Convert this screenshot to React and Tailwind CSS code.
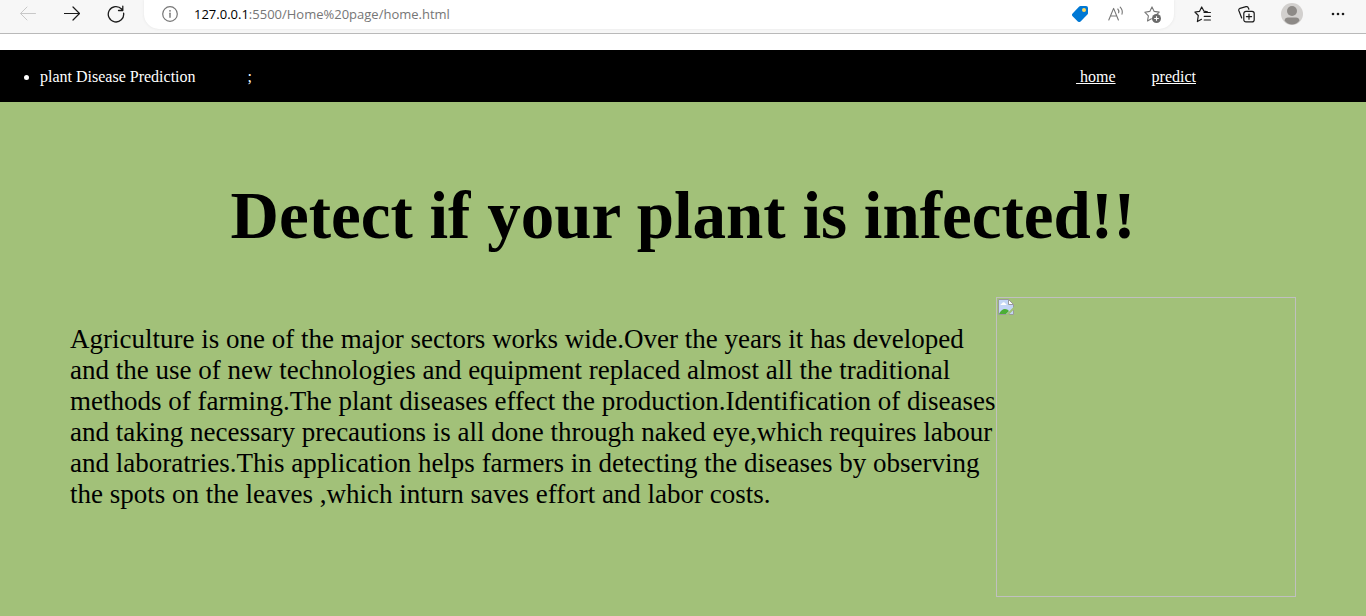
const stroke = { fill: "none", stroke: "currentColor", strokeLinecap: "round", strokeLinejoin: "round" };

function BackIcon() {
  return (
    <svg viewBox="0 0 16 16" className="size-4" strokeWidth="1" aria-hidden="true" {...stroke}>
      <path d="M15.5 7.5H.7M7 1 .5 7.5 7 14" />
    </svg>
  );
}

function ForwardIcon() {
  return (
    <svg viewBox="0 0 16 16" className="size-4" strokeWidth="1.2" aria-hidden="true" {...stroke}>
      <path d="M.5 7.5h15M9 1l6.5 6.5L9 14" />
    </svg>
  );
}

function ReloadIcon() {
  return (
    <svg viewBox="0 0 18 18" className="size-[18px]" strokeWidth="1.3" aria-hidden="true" {...stroke}>
      <path d="M16.6 8.2A7.7 7.7 0 1 1 14.6 4L15.6 5.2M15.8 1.2v4.3h-4.3" />
    </svg>
  );
}

function InfoIcon() {
  return (
    <svg viewBox="0 0 16 16" className="size-4 text-[#767676]" strokeWidth="1.2" aria-hidden="true" {...stroke}>
      <circle cx="8" cy="8" r="7.3" />
      <path d="M8 7.2v4" strokeWidth="1.4" />
      <circle cx="8" cy="4.8" r=".9" fill="currentColor" stroke="none" />
    </svg>
  );
}

function TagIcon() {
  return (
    <svg viewBox="0 0 16 16" className="size-4" aria-hidden="true">
      <path d="M8.6 0H14a2 2 0 0 1 2 2v5.2a2 2 0 0 1-.6 1.4l-6.8 6.8a2 2 0 0 1-2.8 0L.6 10.2a2 2 0 0 1 0-2.8L7.2.6A2 2 0 0 1 8.6 0Z" fill="#0078d4" />
      <circle cx="12" cy="4" r="2" fill="#ffd95e" />
    </svg>
  );
}

function ReadAloudIcon() {
  return (
    <svg viewBox="0 0 16 16" className="size-4 text-[#767676]" strokeWidth="1.1" aria-hidden="true" {...stroke}>
      <path d="M.8 14 5.6 2.4 10.4 14M2.5 10h6.2M9.8 3q1.500 1.600.8 3.800M12.200 1.200q2.900 2.900 1.800 7" />
    </svg>
  );
}

function StarAddIcon() {
  return (
    <svg viewBox="0 0 17 17" className="size-[17px]" aria-hidden="true">
      <path d="M8 .9 10.2 5.4l5 .7-3.6 3.6M7.4 12.8 3.5 15l.9-5.1L.8 6.2l5-.8L8 .9" className="text-[#767676]" strokeWidth="1.1" {...stroke} />
      <circle cx="12.5" cy="12.5" r="4.5" fill="#6b6b6b" />
      <path d="M12.5 10.2v4.6M10.2 12.5h4.6" stroke="#fff" strokeWidth="1.1" />
    </svg>
  );
}

function FavoritesIcon() {
  return (
    <svg viewBox="0 0 17 17" className="size-[17px]" strokeWidth="1.2" aria-hidden="true" {...stroke}>
      <path d="M13.4 5.8 10 5.2 7.7 1 5.6 5.3.9 6l3.4 3.5-.9 6.1 4.1-2.3M10 6.5h6.4M10.2 10.3h6.2M10.2 14h6.2" />
    </svg>
  );
}

function CollectionsIcon() {
  return (
    <svg viewBox="0 0 17 17" className="size-[17px]" strokeWidth="1.2" aria-hidden="true" {...stroke}>
      <rect x="5.8" y="5.3" width="10.4" height="10.6" rx="2.2" />
      <path d="M11 8v5.2M8.4 10.6h5.2M3.7 12 .9 4.8A2 2 0 0 1 2 2.3L8 .7A2 2 0 0 1 10.4 2l.5 1.3" />
    </svg>
  );
}

function ProfileIcon() {
  return (
    <svg viewBox="0 0 22 22" className="size-[22px]" aria-hidden="true">
      <circle cx="11" cy="11" r="11" fill="#d2d0ce" />
      <circle cx="11" cy="8" r="5" fill="#8d8a87" />
      <path d="M3.500 17.500Q4 14.600 7 14.600h8q3 0 3.500 2.900A10.500 10.500 0 0 1 11 21.600a10.500 10.500 0 0 1-7.500-4.100Z" fill="#8d8a87" />
    </svg>
  );
}

function MoreIcon() {
  return (
    <svg viewBox="0 0 14 4" className="h-1 w-3.5" fill="currentColor" aria-hidden="true">
      <circle cx="2" cy="2" r="1.3" />
      <circle cx="7" cy="2" r="1.3" />
      <circle cx="12" cy="2" r="1.3" />
    </svg>
  );
}

function BrokenImageIcon() {
  return (
    <svg viewBox="0 0 16 16" className="size-4" aria-hidden="true">
      <path d="M.5.5h10l5 5v10H.5Z" fill="#c3d6f6" stroke="#9a9a9a" />
      <path d="M10.5.5v5h5Z" fill="#fff" stroke="#9a9a9a" />
      <path d="M2.500 6q0-1.500 1.500-1.500Q4.500 3 6 3.200 7 3.400 7.300 4.500 8.600 4.700 8.500 6Z" fill="#fff" />
      <path d="M1 15q2.500-5 6-5 2.500 0 4 2L8 15Z" fill="#4cae35" />
      <path d="M7.500 16 16 7.500v3L10.500 16Z" fill="#a2c179" />
    </svg>
  );
}

function IconButton({ label, children, className = "", disabled = false }) {
  return (
    <button type="button" aria-label={label} disabled={disabled} className={`flex h-7 shrink-0 items-center justify-center ${className}`}>
      {children}
    </button>
  );
}

function AddressField() {
  return (
    <div className="relative min-w-0 flex-1 font-['Open_Sans','Noto_Sans',sans-serif] text-[13px] leading-7 text-[#767676]">
      <p aria-hidden="true" className="truncate pl-0.5">
        <span className="text-black">127.0.0.1</span>:5500/Home%20page/home.html
      </p>
      <input
        type="text"
        aria-label="Address"
        defaultValue="127.0.0.1:5500/Home%20page/home.html"
        className="absolute inset-0 w-full bg-transparent pl-0.5 text-transparent outline-none"
      />
    </div>
  );
}

function BrowserBar() {
  return (
    <header className="flex h-[34px] items-start border-b border-[#b9b9b9] bg-[#f7f7f7] px-1.5 text-[#1b1b1b]">
      <IconButton label="Back" disabled className="w-11 text-[#c8c8c8]"><BackIcon /></IconButton>
      <IconButton label="Forward" className="w-11"><ForwardIcon /></IconButton>
      <IconButton label="Reload" className="w-11"><ReloadIcon /></IconButton>
      <div className="ml-1.5 flex h-[29px] min-w-0 flex-1 items-start rounded-b-[15px] bg-white pr-1 shadow-[0_0_3px_#e4e4e4]">
        <IconButton label="Site information" className="ml-1 w-11"><InfoIcon /></IconButton>
        <AddressField />
        <IconButton label="Shopping" className="w-9"><TagIcon /></IconButton>
        <IconButton label="Read aloud" className="w-9"><ReadAloudIcon /></IconButton>
        <IconButton label="Add to favorites" className="w-9"><StarAddIcon /></IconButton>
      </div>
      <IconButton label="Favorites" className="ml-1.5 w-11"><FavoritesIcon /></IconButton>
      <IconButton label="Collections" className="w-11"><CollectionsIcon /></IconButton>
      <IconButton label="Profile" className="w-12"><ProfileIcon /></IconButton>
      <IconButton label="More" className="w-11"><MoreIcon /></IconButton>
    </header>
  );
}

export default function App() {
  return (
    <div className="flex min-h-screen flex-col bg-white font-['Liberation_Serif','Times_New_Roman',serif]">
      <BrowserBar />
      <nav className="mt-4 flex h-[52px] items-center bg-black pt-0.5 pr-[170px] pl-10 text-base text-white">
        <ul className="flex-1 list-disc">
          <li>
            plant Disease Prediction<span className="ml-[52px]">;</span>
          </li>
        </ul>
        <a href="#home" className="whitespace-pre underline"> home</a>
        <a href="#predict" className="ml-9 underline">predict</a>
      </nav>
      <main className="flex-1 bg-[#a2c179] px-[70px] text-black">
        <h1 className="pt-[73px] text-center text-[67px] leading-[80px] font-bold">Detect if your plant is infected!!</h1>
        <div className="mt-[42px] flex items-start pb-[19px]">
          <p className="min-w-0 flex-1 pt-[27px] text-[27px] leading-[31px]">
            Agriculture is one of the major sectors works wide.Over the years it has developed and the use of new technologies and equipment replaced almost all the traditional methods of farming.The plant diseases effect the production.Identification of diseases and taking necessary precautions is all done through naked eye,which requires labour and laboratries.This application helps farmers in detecting the diseases by observing the spots on the leaves ,which inturn saves effort and labor costs.
          </p>
          <div role="img" aria-label="Plant" className="size-[300px] shrink-0 border border-[#c0c0c0] p-px">
            <BrokenImageIcon />
          </div>
        </div>
      </main>
    </div>
  );
}
